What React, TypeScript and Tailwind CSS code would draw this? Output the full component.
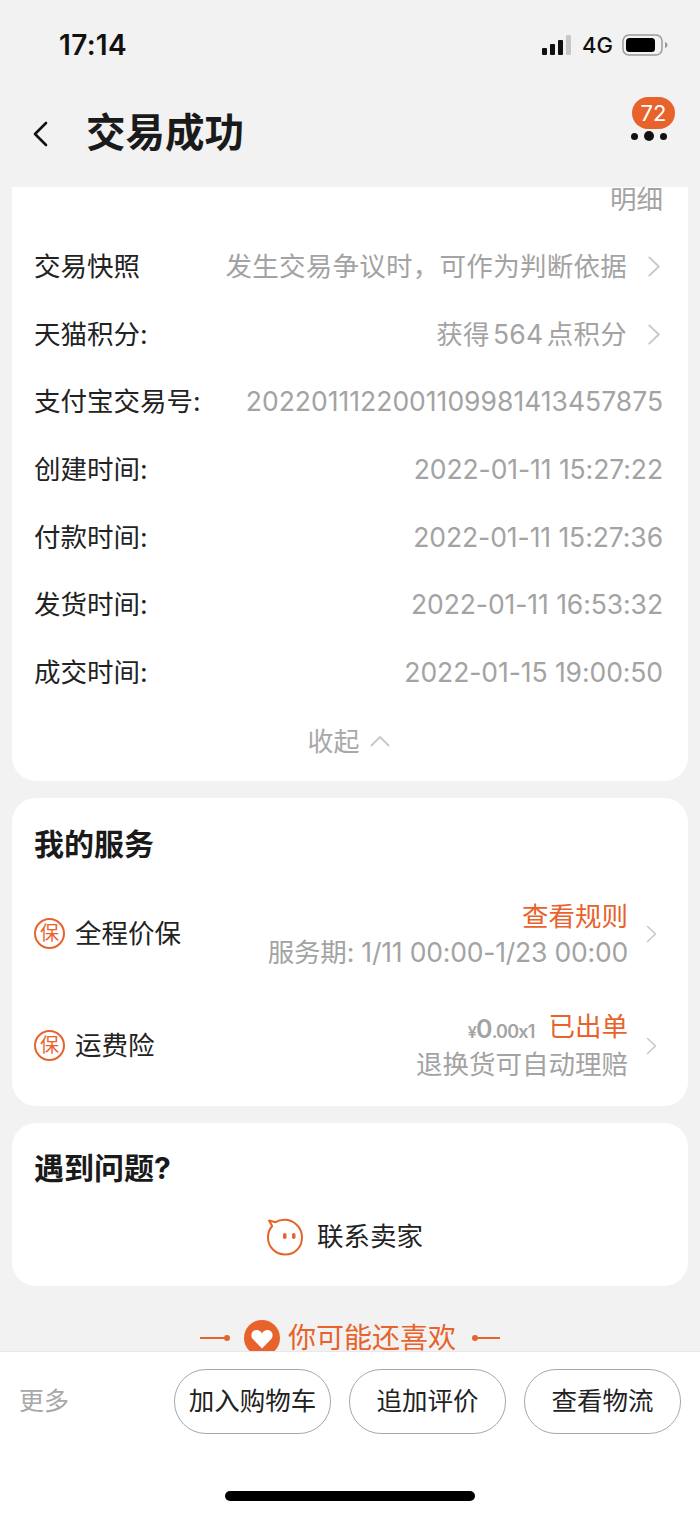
import React from 'react';

const orange = '#e8622c';

function Chevron({ className }: { className: string }) {
  return (
    <svg viewBox="0 0 14 22" fill="none" className={className}>
      <path d="M2 1.5 12 11 2 20.5" stroke="#c8c8c8" strokeWidth="2" strokeLinecap="round" strokeLinejoin="round" />
    </svg>
  );
}

function InfoRow({ label, value, valueClass, arrow }: { label: string; value: string; valueClass: string; arrow?: boolean }) {
  return (
    <div className="flex h-[67.7px] items-center justify-between">
      <span className="text-[26.5px] text-[#222]">{label}</span>
      <div className="flex items-center">
        <span className={`text-[26.5px] text-[#a3a3a3] ${valueClass}`}>{value}</span>
        {arrow && <Chevron className="ml-[20px] mr-[2px] h-[21px] w-[14px]" />}
      </div>
    </div>
  );
}

function BaoIcon() {
  return (
    <div className="flex h-[31px] w-[31px] items-center justify-center rounded-full border-[2.5px] border-[#e8622c] text-[19px] leading-none text-[#e8622c]">
      保
    </div>
  );
}

function ServiceRow({
  label,
  top,
  bottom,
  bottomClass,
  colClass,
}: {
  label: string;
  top: React.ReactNode;
  bottom: string;
  bottomClass: string;
  colClass: string;
}) {
  return (
    <div className="flex h-[112px] items-center pt-[2px]">
      <BaoIcon />
      <span className="ml-[10px] text-[26.5px] text-[#222]">{label}</span>
      <div className={`ml-auto flex flex-col items-end ${colClass}`}>
        <div className="flex h-[37px] items-center">{top}</div>
        <div className={`flex h-[36px] items-center text-[26.5px] text-[#a3a3a3] ${bottomClass}`}>{bottom}</div>
      </div>
      <Chevron className="ml-[18px] mr-[6px] h-[18px] w-[11px]" />
    </div>
  );
}

function ActionButton({ text }: { text: string }) {
  return (
    <button className="flex h-[65px] w-[157px] items-center justify-center rounded-[32px] border border-[#a8a8a8] text-[25.5px] text-[#222]">
      {text}
    </button>
  );
}

function StatusBar() {
  return (
    <div className="flex h-[88px] items-center justify-between pl-[59px] pr-[32px] pt-[2px]">
      <span className="text-[28px] font-semibold tracking-[0.3px] text-[#111]">17:14</span>
      <div className="flex items-center">
        <svg viewBox="0 0 30 20" className="h-[20px] w-[30px]">
          <rect x="0" y="13" width="5" height="7" rx="1" fill="#111" />
          <rect x="8" y="9" width="5" height="11" rx="1" fill="#111" />
          <rect x="16" y="5" width="5" height="15" rx="1" fill="#111" />
          <rect x="24" y="0" width="5" height="20" rx="1" fill="#c8c8c8" />
        </svg>
        <span className="ml-[10px] text-[22px] font-medium text-[#111]">4G</span>
        <svg viewBox="0 0 46 22" className="ml-[9px] h-[22px] w-[46px]">
          <rect x="1" y="1" width="39" height="20" rx="6" fill="none" stroke="#9a9a9a" strokeWidth="1.5" />
          <rect x="4" y="4" width="29" height="14" rx="3.5" fill="#000" />
          <path d="M43 8c1.6.5 2.5 1.6 2.5 3s-.9 2.500-2.500 3z" fill="#9a9a9a" />
        </svg>
      </div>
    </div>
  );
}

function NavBar() {
  return (
    <div className="relative flex h-[99px] items-center pb-[7px] pl-[32px]">
      <svg viewBox="0 0 16 26" fill="none" className="h-[26px] w-[16px]">
        <path d="M14 2 3 13l11 11" stroke="#111" strokeWidth="2.600" strokeLinecap="round" strokeLinejoin="round" />
      </svg>
      <h1 className="ml-[38px] text-[39.500px] font-bold leading-none text-[#1a1a1a]">交易成功</h1>
      <div className="absolute right-[33px] top-[43px] flex items-center gap-[6px]">
        <span className="h-[7px] w-[7px] rounded-full bg-[#111]" />
        <span className="h-[10px] w-[10px] rounded-full bg-[#111]" />
        <span className="h-[7px] w-[7px] rounded-full bg-[#111]" />
      </div>
      <div className="absolute right-[25px] top-[9px] flex h-[32px] w-[43px] items-center justify-center rounded-full bg-[#e8622c] text-[22px] leading-none text-white">
        72
      </div>
    </div>
  );
}

export default function App() {
  return (
    <div
      className="flex h-[1515px] w-[700px] flex-col overflow-hidden bg-[#f2f2f2]"
      style={{ fontFamily: 'Inter, "Noto Sans CJK SC", sans-serif' }}
    >
      <StatusBar />
      <NavBar />

      <div className="flex min-h-0 flex-1 flex-col gap-[17px] overflow-hidden px-3">
        {/* Order info */}
        <div className="shrink-0 rounded-b-[24px] bg-white pb-[5px] pl-[22px] pr-[25px]">
          <div className="h-[46px] text-right text-[26.5px] leading-[24px] text-[#a3a3a3]">明细</div>
          <InfoRow label="交易快照" value="发生交易争议时，可作为判断依据" valueClass="tracking-[0.27px]" arrow />
          <InfoRow label="天猫积分:" value="获得 564 点积分" valueClass="tracking-[0.27px] [word-spacing:-4.5px]" arrow />
          <InfoRow label="支付宝交易号:" value="2022011122001109981413457875" valueClass="tracking-[0px]" />
          <InfoRow label="创建时间:" value="2022-01-11 15:27:22" valueClass="tracking-[-0.08px]" />
          <InfoRow label="付款时间:" value="2022-01-11 15:27:36" valueClass="tracking-[-0.08px]" />
          <InfoRow label="发货时间:" value="2022-01-11 16:53:32" valueClass="tracking-[-0.08px]" />
          <InfoRow label="成交时间:" value="2022-01-15 19:00:50" valueClass="tracking-[-0.08px]" />
          <div className="flex h-[69px] items-center justify-center gap-[10px] text-[26px] text-[#a8a8a8]">
            收起
            <svg viewBox="0 0 20 12" fill="none" className="h-[12px] w-[20px]">
              <path d="M1.500 10.500 10 2l8.500 8.500" stroke="#c8c8c8" strokeWidth="1.800" strokeLinecap="round" strokeLinejoin="round" />
            </svg>
          </div>
        </div>

        {/* Services */}
        <div className="shrink-0 rounded-[24px] bg-white pb-[5px] pl-[22px] pr-[25px] pt-[28px]">
          <h2 className="mb-[15px] text-[30px] font-bold leading-[36px] text-[#1a1a1a]">我的服务</h2>
          <ServiceRow
            label="全程价保"
            top={<span className="text-[26.5px] text-[#e8622c]">查看规则</span>}
            bottom="服务期: 1/11 00:00-1/23 00:00"
            bottomClass="tracking-[-0.2px] pl-[2px]"
            colClass="pt-[2px]"
          />
          <ServiceRow
            label="运费险"
            top={
              <>
                <span className="mr-[14px] mt-[5px] flex items-baseline font-semibold tracking-[-0.8px] text-[#a3a3a3]">
                  <span className="text-[16px]">¥</span>
                  <span className="text-[25px]">0</span>
                  <span className="text-[18px]">.00x1</span>
                </span>
                <span className="text-[26.5px] text-[#e8622c]">已出单</span>
              </>
            }
            bottom="退换货可自动理赔"
            bottomClass=""
            colClass="gap-[2px]"
          />
        </div>

        {/* Contact */}
        <div className="shrink-0 rounded-[24px] bg-white pb-[27px] pl-[22px] pr-[25px] pt-[27px]">
          <h2 className="text-[30px] font-bold leading-[36px] text-[#1a1a1a]">遇到问题?</h2>
          <div className="mt-[29px] flex h-[44px] items-center justify-center gap-[13px] pr-[8px]">
            <svg viewBox="0 0 38 38" fill="none" className="h-[38px] w-[38px]">
              <path
                d="M3 2.500 9.500 4.200C12 2.600 15.200 1.800 18.500 1.800 27.500 1.800 36 9 36 19.500S28 36.500 19 36.500C9.500 36.500 2 29 2 19.500 2 15 3.500 11 6.200 8Z"
                stroke={orange}
                strokeWidth="2"
                strokeLinejoin="round"
              />
              <rect x="17" y="15" width="3.500" height="6" rx="1.750" fill={orange} />
              <rect x="26" y="15" width="3.500" height="6" rx="1.750" fill={orange} />
            </svg>
            <span className="text-[26.5px] text-[#222]">联系卖家</span>
          </div>
        </div>

        {/* Recommendations, cut off by the action bar */}
        <div className="flex h-[70px] shrink-0 items-center justify-center">
          <div className="flex items-center">
            <span className="h-[2px] w-[24px] bg-[#e8622c]" />
            <span className="h-[6px] w-[6px] rounded-full bg-[#e8622c]" />
          </div>
          <svg viewBox="0 0 36 36" className="ml-[14px] h-[36px] w-[36px]">
            <circle cx="18" cy="18" r="18" fill={orange} />
            <path d="M18 28.500 8.800 19C6 16 7.500 10 12.500 10c2.500 0 4.500 1.500 5.500 3.500 1-2 3-3.500 5.500-3.500 5 0 6.500 6 3.700 9z" fill="#fff" />
          </svg>
          <span className="ml-[8px] text-[28px] text-[#e8622c]">你可能还喜欢</span>
          <div className="ml-[16px] flex items-center">
            <span className="h-[6px] w-[6px] rounded-full bg-[#e8622c]" />
            <span className="h-[2px] w-[22px] bg-[#e8622c]" />
          </div>
        </div>
      </div>

      {/* Action bar */}
      <div className="relative h-[164px] shrink-0 border-t border-[#e8e8e8] bg-white pt-[17px]">
        <div className="flex items-center pl-[19px] pr-[19px]">
          <span className="text-[25px] text-[#a8a8a8]">更多</span>
          <div className="ml-auto flex gap-[18px]">
            <ActionButton text="加入购物车" />
            <ActionButton text="追加评价" />
            <ActionButton text="查看物流" />
          </div>
        </div>
        <div className="absolute bottom-[14px] left-[225px] h-[10px] w-[250px] rounded-full bg-black" />
      </div>
    </div>
  );
}
